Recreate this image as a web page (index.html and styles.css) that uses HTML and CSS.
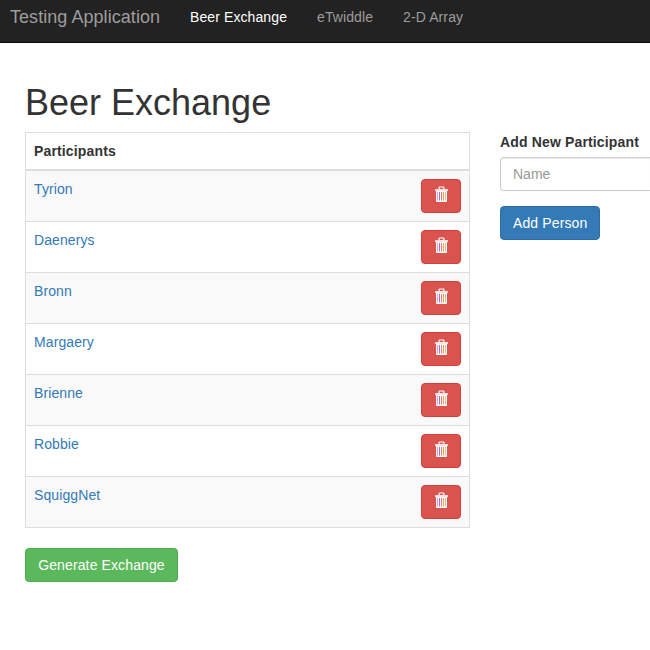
FILE: index.html
```html
<!DOCTYPE html>
<html lang="en">
<head>
<meta charset="utf-8">
<title>Beer Exchange</title>
<link rel="stylesheet" href="styles.css">
</head>
<body>
<svg width="0" height="0" class="sprite"><symbol id="trash" viewBox="0 0 14 16"><path fill="none" stroke="#fff" stroke-width="1.2" d="M5.1 3V1.6q0-.6.6-.6h3.6q.6 0 .6.6V3"/><path fill="#fbe3e2" d="M1.5 3h12q.5 0 .5.5V5H1V3.500q0-.5.5-.5z"/><path fill="#fff" d="M2 5h11v10q0 1-1 1H3q-1 0-1-1z"/><path fill="#e8a0cb" d="M3 6h1v8.500H3z"/><path fill="#b565d8" d="M5 6h1v8.500H5z"/><path fill="#e87886" d="M7 6h1v8.500H7z"/><path fill="#f29a58" d="M9 6h1v8.500H9z"/><path fill="#f0c070" d="M11 6h1v8.500h-1z"/></symbol></svg>
<nav class="navbar">
  <a class="brand">Testing Application</a>
  <a class="nav-link active">Beer Exchange</a>
  <a class="nav-link">eTwiddle</a>
  <a class="nav-link">2-D Array</a>
</nav>
<main class="page">
  <h1>Beer Exchange</h1>
  <div class="row">
    <section class="list">
      <table>
        <thead><tr><th colspan="2">Participants</th></tr></thead>
        <tbody>
          <tr><td><a>Tyrion</a></td><td class="action"><button class="btn danger" aria-label="Delete"><svg><use href="#trash"/></svg></button></td></tr>
          <tr><td><a>Daenerys</a></td><td class="action"><button class="btn danger" aria-label="Delete"><svg><use href="#trash"/></svg></button></td></tr>
          <tr><td><a>Bronn</a></td><td class="action"><button class="btn danger" aria-label="Delete"><svg><use href="#trash"/></svg></button></td></tr>
          <tr><td><a>Margaery</a></td><td class="action"><button class="btn danger" aria-label="Delete"><svg><use href="#trash"/></svg></button></td></tr>
          <tr><td><a>Brienne</a></td><td class="action"><button class="btn danger" aria-label="Delete"><svg><use href="#trash"/></svg></button></td></tr>
          <tr><td><a>Robbie</a></td><td class="action"><button class="btn danger" aria-label="Delete"><svg><use href="#trash"/></svg></button></td></tr>
          <tr><td><a>SquiggNet</a></td><td class="action"><button class="btn danger" aria-label="Delete"><svg><use href="#trash"/></svg></button></td></tr>
        </tbody>
      </table>
      <button class="btn success">Generate Exchange</button>
    </section>
    <form class="add">
      <label for="name">Add New Participant</label>
      <input id="name" type="text" placeholder="Name">
      <button type="button" class="btn primary">Add Person</button>
    </form>
  </div>
</main>
</body>
</html>
```
FILE: styles.css
```css
* { box-sizing: border-box; }
body {
  margin: 0;
  height: 650px;
  background: #fff;
  color: #333;
  font: 14px/20px "Liberation Sans", Arial, sans-serif;
  letter-spacing: .1px;
}
.sprite { display: block; }
.navbar {
  display: flex;
  height: 43px;
  padding-left: 10px;
  background: #222;
  border-bottom: 1px solid #080808;
}
.brand { width: 165px; padding-top: 7px; font-size: 18px; letter-spacing: .05px; color: #9d9d9d; white-space: nowrap; }
.nav-link { padding: 7px 15px; color: #9d9d9d; white-space: nowrap; }
.nav-link.active { color: #fff; }
.page { padding: 40px 0 0 25px; }
h1 { margin: 0 0 10px; font-size: 36px; font-weight: 400; line-height: 39px; letter-spacing: 0; }
.row { display: flex; gap: 30px; }
.list { width: 445px; flex: none; }
table { width: 100%; margin-bottom: 20px; border-collapse: collapse; border: 1px solid #ddd; }
th, td { padding: 8px; text-align: left; vertical-align: top; border-top: 1px solid #ddd; }
th { border-bottom: 2px solid #ddd; letter-spacing: .15px; }
tbody tr:nth-child(odd) { background: #f9f9f9; }
td a { color: #337ab7; }
.action { width: 57px; }
.btn {
  display: block;
  height: 34px;
  padding: 6px 12px;
  border: 1px solid;
  border-radius: 4px;
  color: #fff;
  font: inherit;
  letter-spacing: .12px;
  white-space: nowrap;
}
.danger { width: 40px; padding: 5px 12px 9px; background: #d9534f; border-color: #d43f3a; }
.danger svg { display: block; width: 14px; height: 16px; }
.success { width: 153px; background: #5cb85c; border-color: #4cae4c; }
.primary { width: 100px; background: #337ab7; border-color: #2e6da4; }
.add { flex: 1; min-width: 0; }
label { display: block; margin-bottom: 5px; font-weight: 700; letter-spacing: .15px; white-space: nowrap; }
input {
  display: block;
  width: 100%;
  height: 34px;
  margin-bottom: 15px;
  padding: 6px 12px;
  border: 1px solid #ccc;
  border-right: 0;
  border-radius: 4px 0 0 4px;
  box-shadow: inset 0 1px 1px rgba(0, 0, 0, .075);
  font: inherit;
}
input::placeholder { color: #999; }
```
